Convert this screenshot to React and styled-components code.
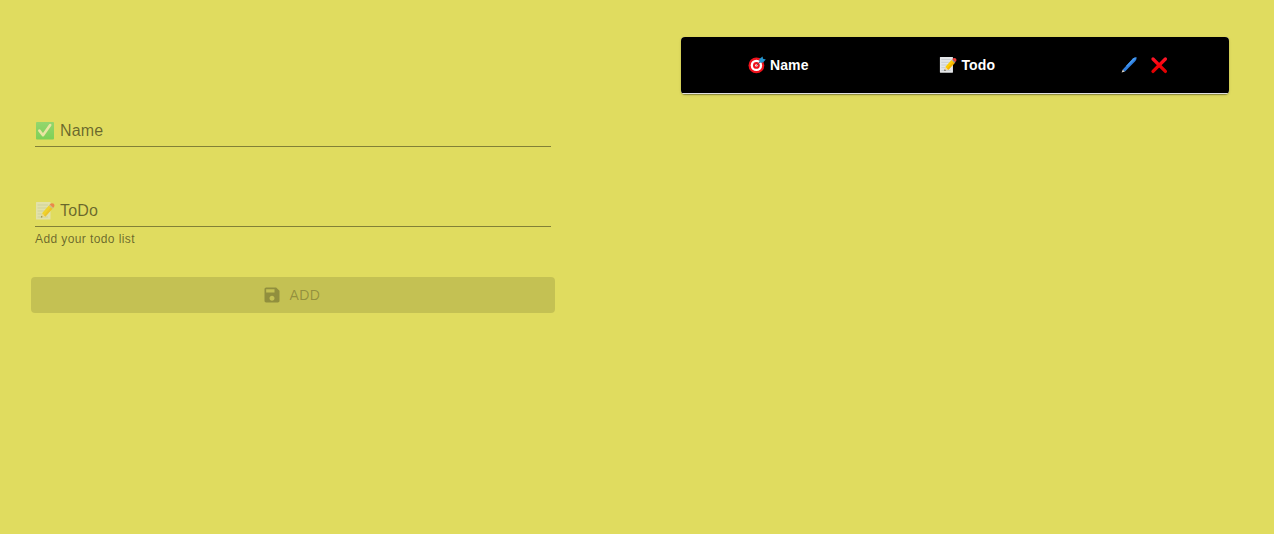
import React, { useState } from "react";
import styled, { createGlobalStyle } from "styled-components";

const GlobalStyle = createGlobalStyle`
  *, *::before, *::after { box-sizing: border-box; }
  body {
    margin: 0;
    background: #e0dc5f;
    font-family: "Liberation Sans", Arial, sans-serif;
    color: rgba(0, 0, 0, 0.87);
  }
`;

const Page = styled.main`
  display: grid;
  grid-template-columns: 1fr 1fr;
  align-items: start;
`;

const Form = styled.form`
  display: flex;
  flex-direction: column;
  padding: 104px 82px 0 31px;
`;

const Field = styled.div`
  position: relative;
  margin: 0 4px;
  padding-top: 12px;
  height: ${({ $tall }) => ($tall ? 93 : 80)}px;
`;

const Label = styled.label`
  position: absolute;
  top: 16px;
  left: 0;
  display: flex;
  align-items: center;
  gap: 5px;
  font-size: 16px;
  line-height: 22px;
  letter-spacing: 0.15px;
  color: rgba(0, 0, 0, 0.54);
  pointer-events: none;

  svg { opacity: 0.54; }
`;

const Input = styled.input`
  display: block;
  width: 100%;
  height: 31px;
  padding: 0;
  border: 0;
  border-bottom: 1px solid rgba(0, 0, 0, 0.42);
  background: transparent;
  font: inherit;
  outline: none;
`;

const Helper = styled.p`
  margin: 2px 0 0;
  font-size: 12px;
  line-height: 20px;
  letter-spacing: 0.4px;
  color: rgba(0, 0, 0, 0.54);
`;

const AddButton = styled.button`
  display: flex;
  align-items: center;
  justify-content: center;
  gap: 8px;
  height: 36px;
  padding: 0 10px 0 6px;
  border: 0;
  border-radius: 4px;
  background: rgba(0, 0, 0, 0.12);
  color: rgba(0, 0, 0, 0.26);
  font: 500 14px/24px "Liberation Sans", Arial, sans-serif;
  letter-spacing: 0.4px;
`;

const Panel = styled.section`
  padding: 37px 45px 0 44px;
`;

const Table = styled.table`
  width: 100%;
  table-layout: fixed;
  border-collapse: separate;
  border-spacing: 0;
  border-radius: 4px;
  overflow: hidden;
  background: #fff;
  box-shadow: 0 2px 1px -1px rgba(0, 0, 0, 0.2), 0 1px 1px rgba(0, 0, 0, 0.14), 0 1px 3px rgba(0, 0, 0, 0.12);
`;

const HeadCell = styled.th`
  width: ${({ $width }) => $width};
  height: 57px;
  padding: 16px;
  border-bottom: 1px solid #e0e0e0;
  background: #000;
  background-clip: padding-box;
  color: #fff;
  font-size: 14px;
  font-weight: 700;
  line-height: 24px;
  letter-spacing: 0.15px;
  text-align: center;
`;

const CellContent = styled.span`
  display: flex;
  align-items: center;
  justify-content: center;
  gap: ${({ $gap }) => $gap}px;
  height: 24px;
`;

function SaveIcon() {
  return (
    <svg width="20" height="20" viewBox="0 0 24 24" fill="currentColor" aria-hidden="true">
      <path d="M17 3H5c-1.11 0-2 .9-2 2v14c0 1.1.89 2 2 2h14c1.1 0 2-.9 2-2V7l-4-4zm-5 16c-1.66 0-3-1.34-3-3s1.34-3 3-3 3 1.34 3 3-1.34 3-3 3zm3-10H5V5h10v4z" />
    </svg>
  );
}

function CheckIcon() {
  return (
    <svg width="20" height="20" viewBox="0 0 20 20" aria-hidden="true">
      <defs>
        <linearGradient id="check-fill" x1="0" y1="0" x2="0" y2="1">
          <stop offset="0" stopColor="#54d27c" />
          <stop offset="1" stopColor="#2cc850" />
        </linearGradient>
      </defs>
      <rect x="1" y="1" width="18" height="17.4" rx="1" fill="url(#check-fill)" />
      <path d="M4.4 9.6 L8 14.2 L15.2 4" fill="none" stroke="#f4eedc" strokeWidth="2.6" strokeLinecap="round" strokeLinejoin="round" />
    </svg>
  );
}

function MemoIcon({ size }) {
  return (
    <svg width={size} height={size} viewBox="0 0 20 20" aria-hidden="true">
      <rect x="1" y="1" width="14.5" height="17.6" rx="0.5" fill="#e4e6e8" />
      <path d="M2.6 4 H13 M2.6 7 H12 M2.6 10 H10 M2.6 13 H7 M2.6 16 H13" stroke="#b6bec4" strokeWidth="0.7" />
      <path d="M5.8 16.8 L7 12.2 L10.4 15.4Z" fill="#f2d7a8" />
      <path d="M5.8 16.8 L6.4 14.8 L7.8 16.1Z" fill="#40464a" />
      <path d="M7 12.2 L13.8 4.4 L17.4 7.8 L10.4 15.4Z" fill="#fdcc00" />
      <path d="M9 14.2 L15.8 6.4 L17.4 7.8 L10.4 15.4Z" fill="#f5b000" />
      <path d="M13.8 4.4 L14.7 3.4 L18.3 6.8 L17.4 7.8Z" fill="#b8a79c" />
      <path d="M14.7 3.4 Q16.8 1.4 18.8 2.8 Q20.2 4.8 18.3 6.8Z" fill="#f4403c" />
    </svg>
  );
}

function TargetIcon() {
  return (
    <svg width="18" height="18" viewBox="0 0 18 18" aria-hidden="true">
      <circle cx="8.4" cy="9.4" r="7.9" fill="#f0121c" />
      <circle cx="8.4" cy="9.4" r="5.7" fill="#fff" />
      <circle cx="8.4" cy="9.4" r="3.4" fill="#f0121c" />
      <circle cx="8.4" cy="9.4" r="1.2" fill="#fff" />
      <path d="M8.4 9.4 L13 5" stroke="#6b4a50" strokeWidth="1" />
      <path d="M11.2 6.8 L11.4 3 L14.6 0.4 L15 2.8 L17.8 3.6 L15 6.6Z" fill="#2496cf" />
    </svg>
  );
}

function PenIcon() {
  return (
    <svg width="18" height="18" viewBox="0 0 18 18" role="img" aria-label="Edit">
      <path d="M1.6 16.6 L2.8 13.4 L5 15.4Z" fill="#d8d4cc" />
      <path d="M2.8 13.4 L13 2.6 Q14.4 1.2 16.6 1.6 Q16.8 3.6 15.4 5 L5 15.4Z" fill="#2f7fe0" />
      <path d="M13 2.6 Q14.4 1.2 16.6 1.6 L14.2 4 L7.4 10.4 L6 10Z" fill="#4598ee" />
    </svg>
  );
}

function CrossIcon() {
  return (
    <svg width="18" height="18" viewBox="0 0 18 18" role="img" aria-label="Delete">
      <defs>
        <linearGradient id="cross-stroke" gradientUnits="userSpaceOnUse" x1="0" y1="1" x2="0" y2="17">
          <stop offset="0" stopColor="#ff1a30" />
          <stop offset="0.5" stopColor="#f80008" />
          <stop offset="1" stopColor="#dc0000" />
        </linearGradient>
      </defs>
      <path d="M3 3 L15.4 15.4 M15.4 3 L3 15.4" stroke="url(#cross-stroke)" strokeWidth="3.3" strokeLinecap="round" />
    </svg>
  );
}

export default function App() {
  const [name, setName] = useState("");
  const [todo, setTodo] = useState("");
  return (
    <>
      <GlobalStyle />
      <Page>
        <Form onSubmit={(e) => e.preventDefault()}>
          <Field>
            {!name && (
              <Label htmlFor="name">
                <CheckIcon />
                Name
              </Label>
            )}
            <Input id="name" aria-label="Name" value={name} onChange={(e) => setName(e.target.value)} />
          </Field>
          <Field $tall>
            {!todo && (
              <Label htmlFor="todo">
                <MemoIcon size={20} />
                ToDo
              </Label>
            )}
            <Input
              id="todo"
              aria-label="ToDo"
              aria-describedby="todo-help"
              value={todo}
              onChange={(e) => setTodo(e.target.value)}
            />
            <Helper id="todo-help">Add your todo list</Helper>
          </Field>
          <AddButton type="submit" disabled={!name || !todo}>
            <SaveIcon />
            ADD
          </AddButton>
        </Form>
        <Panel>
          <Table>
            <thead>
              <tr>
                <HeadCell $width="35.5%">
                  <CellContent $gap={4}>
                    <TargetIcon />
                    Name
                  </CellContent>
                </HeadCell>
                <HeadCell $width="33.5%">
                  <CellContent $gap={4}>
                    <MemoIcon size={18} />
                    Todo
                  </CellContent>
                </HeadCell>
                <HeadCell $width="31%">
                  <CellContent $gap={12}>
                    <PenIcon />
                    <CrossIcon />
                  </CellContent>
                </HeadCell>
              </tr>
            </thead>
          </Table>
        </Panel>
      </Page>
    </>
  );
}
